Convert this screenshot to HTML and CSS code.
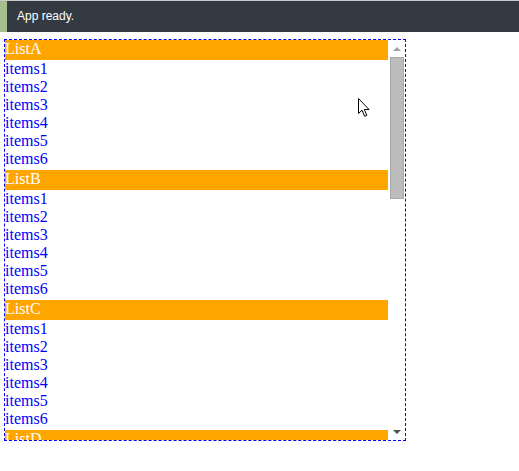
FILE: index.html
```html
<!DOCTYPE html>
<html>
<head>
<meta charset="utf-8">
<link rel="stylesheet" href="styles.css">
</head>
<body>
<div class="topbar">
  <div class="accent"></div>
  <div class="status">App ready.</div>
</div>
<div class="main">
  <div class="listbox">
    <div class="viewport">
      <div class="header first">ListA</div>
      <div class="item">items1</div><div class="item">items2</div><div class="item">items3</div><div class="item">items4</div><div class="item">items5</div><div class="item">items6</div>
      <div class="header">ListB</div>
      <div class="item">items1</div><div class="item">items2</div><div class="item">items3</div><div class="item">items4</div><div class="item">items5</div><div class="item">items6</div>
      <div class="header">ListC</div>
      <div class="item">items1</div><div class="item">items2</div><div class="item">items3</div><div class="item">items4</div><div class="item">items5</div><div class="item">items6</div>
      <div class="header">ListD</div>
    </div>
    <div class="scrollbar">
      <div class="btn up"></div>
      <div class="track">
        <div class="thumb"></div>
      </div>
      <div class="btn down"></div>
    </div>
  </div>
</div>
<svg class="cursor" width="13" height="20" viewBox="0 0 13 20">
  <path d="M0.5 0.5 L0.5 15.5 L4 12.2 L6.6 18.3 L8.8 17.4 L6.3 11.5 L11 11.5 Z" fill="#fff" stroke="#000" stroke-width="1" stroke-linejoin="miter"/>
</svg>
</body>
</html>
```
FILE: styles.css
```css
html, body {
  margin: 0;
  padding: 0;
  background: #ffffff;
}
.topbar {
  display: flex;
  height: 31px;
  border-top: 1px solid #c9c9c9;
  background: #343a41;
}
.accent {
  width: 7px;
  background: #a5be8d;
}
.status {
  padding-left: 10px;
  font-family: "Liberation Sans", Arial, sans-serif;
  font-size: 12px;
  line-height: 31px;
  color: #ffffff;
}
.main {
  padding: 7px 0 0 4px;
}
.listbox {
  display: flex;
  width: 400px;
  height: 400px;
  border: 1px dashed #0000ff;
  font-family: "Liberation Serif", "Times New Roman", serif;
  font-size: 16px;
}
.viewport {
  flex: 1;
  overflow: hidden;
}
.header {
  background: #ffa500;
  color: #ffffff;
  line-height: 18px;
  padding-bottom: 2px;
  margin-top: 2px;
}
.header.first {
  margin-top: 0;
}
.item {
  color: #0000ff;
  line-height: 18px;
}
.scrollbar {
  width: 17px;
  display: flex;
  flex-direction: column;
  background: #ffffff;
}
.btn {
  height: 17px;
  display: flex;
  align-items: center;
  justify-content: center;
}
.btn::before {
  content: "";
  width: 0;
  height: 0;
  border-left: 4px solid transparent;
  border-right: 4px solid transparent;
}
.btn.up::before {
  border-bottom: 4px solid #a3a3a3;
}
.btn.down::before {
  border-top: 4px solid #505050;
}
.track {
  flex: 1;
  padding: 0 1px 0 2px;
}
.thumb {
  height: 140px;
  background: #bcbcbc;
  border: 1px solid #a9a9a9;
}
.cursor {
  position: absolute;
  left: 358px;
  top: 98px;
}
```
